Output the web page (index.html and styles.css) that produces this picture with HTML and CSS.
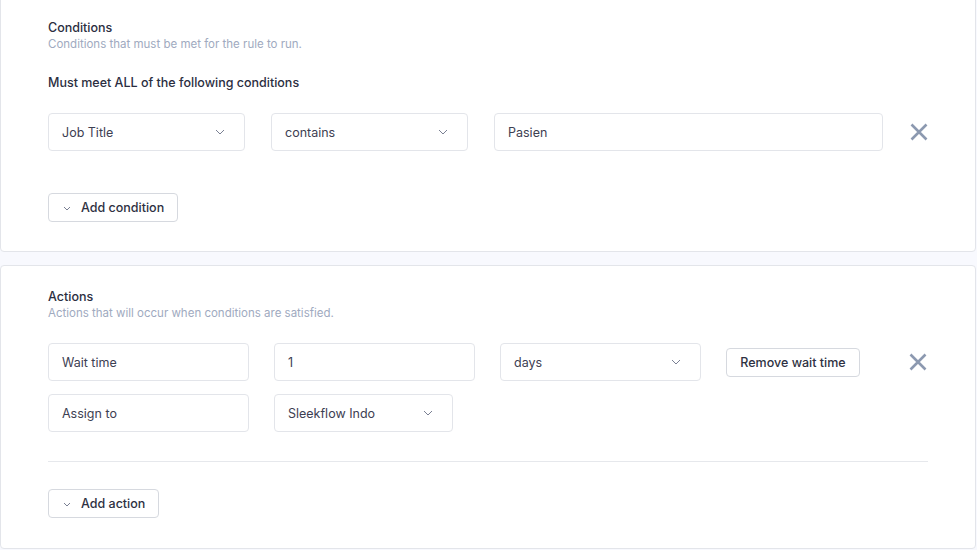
FILE: index.html
```html
<!DOCTYPE html>
<html>
<head>
<meta charset="utf-8">
<link rel="stylesheet" href="styles.css">
</head>
<body>
<section class="card card-conditions">
  <div class="head">
    <div class="title">Conditions</div>
    <div class="subtitle">Conditions that must be met for the rule to run.</div>
  </div>
  <div class="label">Must meet ALL of the following conditions</div>
  <div class="row cond-row">
    <div class="field select w197">Job Title<svg class="chev" viewBox="0 0 10 6"><path d="M1 1l4 4 4-4"/></svg></div>
    <div class="field select w197">contains<svg class="chev" viewBox="0 0 10 6"><path d="M1 1l4 4 4-4"/></svg></div>
    <div class="field w388">Pasien</div>
    <svg class="close" viewBox="0 0 18 18"><path d="M1.5 1.5l15 15M16.5 1.5l-15 15"/></svg>
  </div>
  <button class="btn add-cond"><svg class="bchev" viewBox="0 0 8 5"><path d="M1 1l3 3 3-3"/></svg>Add condition</button>
</section>
<section class="card card-actions">
  <div class="head">
    <div class="title">Actions</div>
    <div class="subtitle">Actions that will occur when conditions are satisfied.</div>
  </div>
  <div class="row act-row">
    <div class="field w200">Wait time</div>
    <div class="field w200">1</div>
    <div class="field select w200">days<svg class="chev" viewBox="0 0 10 6"><path d="M1 1l4 4 4-4"/></svg></div>
    <button class="btn remove">Remove wait time</button>
    <svg class="close close2" viewBox="0 0 18 18"><path d="M1.5 1.5l15 15M16.5 1.5l-15 15"/></svg>
  </div>
  <div class="row act-row second">
    <div class="field w200">Assign to</div>
    <div class="field select w178">Sleekflow Indo<svg class="chev" viewBox="0 0 10 6"><path d="M1 1l4 4 4-4"/></svg></div>
  </div>
  <div class="divider"></div>
  <button class="btn add-act"><svg class="bchev" viewBox="0 0 8 5"><path d="M1 1l3 3 3-3"/></svg>Add action</button>
</section>
</body>
</html>
```
FILE: styles.css
```css
* { box-sizing: border-box; }
html, body { margin: 0; padding: 0; }
body {
  background: #f8f9fe;
  font-family: Inter, "Noto Sans", sans-serif;
  color: #2e3142;
  width: 977px;
  height: 550px;
  overflow: hidden;
}
.card {
  background: #fff;
  border: 1px solid #e3e5ea;
  border-radius: 4px;
  width: 976px;
  padding-left: 47px;
  display: flex;
  flex-direction: column;
  align-items: flex-start;
}
.card-conditions {
  margin-top: -20px;
  height: 272px;
  padding-top: 38px;
}
.card-actions {
  margin-top: 13px;
  height: 284px;
  padding-top: 22px;
}
.title {
  font-size: 12.5px;
  line-height: 18px;
  font-weight: 500;
  color: #2b2e3f;
}
.subtitle {
  font-size: 11.5px;
  line-height: 15px;
  color: #a0aac0;
}
.label {
  margin-top: 22px;
  font-size: 12.5px;
  line-height: 18px;
  font-weight: 500;
  color: #2b2e3f;
}
.row {
  display: flex;
  align-items: center;
}
.cond-row { margin-top: 21px; }
.field {
  height: 38px;
  border: 1px solid #e3e5ea;
  border-radius: 4px;
  background: #fff;
  display: flex;
  align-items: center;
  padding-left: 13px;
  font-size: 12.5px;
  color: #3d4052;
  position: relative;
}
.select { justify-content: space-between; padding-right: 19px; }
.w197 { width: 197px; margin-right: 26px; }
.w388 { width: 389px; }
.w200 { width: 201px; margin-right: 25px; }
.w178 { width: 179px; }
.chev {
  width: 10px;
  height: 6px;
  fill: none;
  stroke: #7a8093;
  stroke-width: 1;
}
.close {
  width: 18px;
  height: 18px;
  margin-left: 27px;
  fill: none;
  stroke: #8c99b0;
  stroke-width: 2.6;
}
.close2 { margin-left: 49px; }
.btn {
  font-family: Inter, "Noto Sans", sans-serif;
  font-size: 12.5px;
  font-weight: 500;
  color: #2e3142;
  background: #fff;
  border: 1px solid #d6d9df;
  border-radius: 4px;
  display: flex;
  align-items: center;
  padding: 0;
}
.bchev {
  width: 8px;
  height: 5px;
  fill: none;
  stroke: #7a8093;
  stroke-width: 1;
  margin-right: 10px;
  margin-top: 2px;
}
.add-cond {
  margin-top: 42px;
  height: 29px;
  width: 130px;
  padding-left: 14px;
}
.act-row { margin-top: 22px; }
.act-row.second { margin-top: 13px; }
.remove {
  height: 29px;
  width: 134px;
  justify-content: center;
}
.divider {
  margin-top: 29px;
  width: 880px;
  height: 1px;
  background: #e6e8ec;
}
.add-act {
  margin-top: 27px;
  height: 29px;
  width: 111px;
  padding-left: 14px;
}
```
